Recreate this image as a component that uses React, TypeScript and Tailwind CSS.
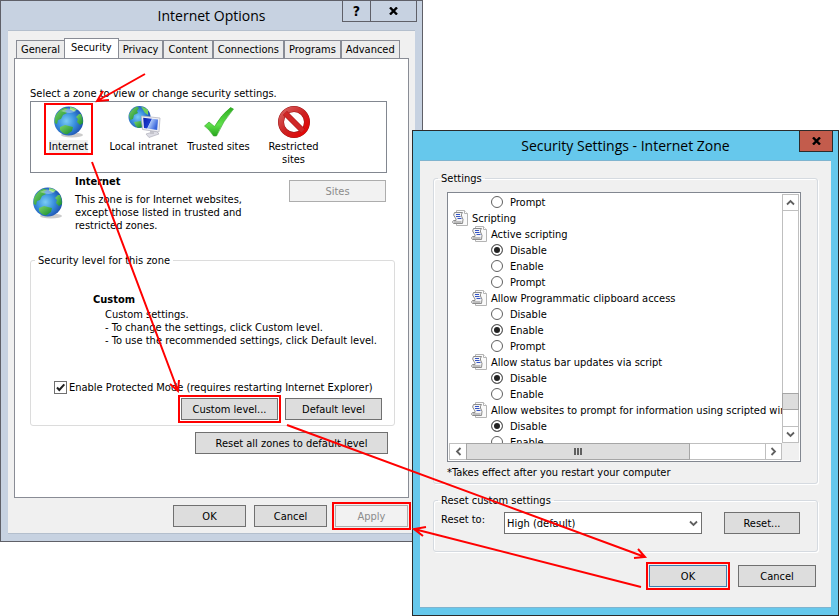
import type { ReactNode } from 'react';

const tabs = ['General', 'Security', 'Privacy', 'Content', 'Connections', 'Programs', 'Advanced'];

const scriptSettings = [
  { title: 'Active scripting', name: 'active', options: ['Disable', 'Enable', 'Prompt'], value: 'Disable' },
  { title: 'Allow Programmatic clipboard access', name: 'clipboard', options: ['Disable', 'Enable', 'Prompt'], value: 'Enable' },
  { title: 'Allow status bar updates via script', name: 'statusbar', options: ['Disable', 'Enable'], value: 'Disable' },
  { title: 'Allow websites to prompt for information using scripted windows', name: 'prompts', options: ['Disable', 'Enable'], value: 'Disable' },
];

// Two-pixel marker drawn around the controls the arrows point at
const marked = 'outline-2 outline-offset-1 outline-[#ff0000]';

function GlobeIcon({ className = 'w-8 h-8' }: { className?: string }) {
  return (
    <svg viewBox="0 0 32 32" className={`shrink-0 ${className}`} aria-hidden="true">
      <defs>
        <radialGradient id="sea" cx="0.42" cy="0.5" r="0.6">
          <stop offset="0" stopColor="#7accf6" />
          <stop offset="0.5" stopColor="#3a90de" />
          <stop offset="1" stopColor="#1a4cac" />
        </radialGradient>
        <linearGradient id="land" x1="0" y1="0" x2="1" y2="1">
          <stop offset="0" stopColor="#7fd46a" />
          <stop offset="1" stopColor="#128a2c" />
        </linearGradient>
      </defs>
      <ellipse cx="19" cy="29" rx="11" ry="2.4" fill="#000" opacity="0.2" />
      <circle cx="15.7" cy="15" r="14.5" fill="url(#sea)" />
      <path d="M2 11 Q5 4 12 1.4 L15 3 L12 5 L14 7 L10 9 L8 13 L5 14 L4 18 L1.6 17 Z" fill="url(#land)" />
      <path d="M17 1 Q21 1.4 24 3.6 L21 5.6 L17 3.6 Z" fill="#8bdc74" />
      <path d="M26 8 L28 8 Q30 12 30 17 L27 19 L24 16 L25 13 L23 11 Z" fill="url(#land)" />
      <path d="M7 21 L12 19 L20 21 L19 25 L14 28.5 Q10 28 7 24 Z" fill="url(#land)" />
      <path d="M8 5 Q15 0 23 5 Q17 9 8 5" fill="#fff" opacity="0.35" />
    </svg>
  );
}

function IntranetIcon() {
  return (
    <svg viewBox="0 0 32 32" className="h-8 w-8 shrink-0 overflow-visible" aria-hidden="true">
      <defs>
        <linearGradient id="screen" x1="0" y1="0" x2="1" y2="0.4">
          <stop offset="0" stopColor="#0c1fa8" />
          <stop offset="0.5" stopColor="#1c3fd0" />
          <stop offset="0.55" stopColor="#a9c4f8" />
          <stop offset="1" stopColor="#3865dc" />
        </linearGradient>
      </defs>
      <circle cx="11.5" cy="11" r="11" fill="url(#sea)" />
      <path d="M1 9 Q3 3 9 0.5 L11 2 L9 5 L10 7 L6 9 L5 13 L2 14 Z" fill="url(#land)" />
      <path d="M13 0.4 Q17 1 20 4 L20 9 L17 7 Z" fill="#6fce5c" />
      <path d="M6 16 L13 15 L14 21 L10 22 Q7 20 6 16 Z" fill="url(#land)" />
      <path d="M18 28 L28 25 L31 28 L21 31.5 Z" fill="#dcdce4" stroke="#a8a8b4" strokeWidth="0.6" />
      <path d="M22 23 L26 23 L26 28 L22 28 Z" fill="#c4c4cc" />
      <path d="M13.5 10 L32 12 L31 26 L14.5 23.5 Z" fill="#f0f0f4" stroke="#b8b8c2" strokeWidth="0.8" />
      <path d="M15.2 11.8 L30 13.4 L29.2 24 L16 22 Z" fill="url(#screen)" />
    </svg>
  );
}

function TrustedIcon() {
  return (
    <svg viewBox="0 0 32 32" className="h-8 w-8 shrink-0" aria-hidden="true">
      <defs>
        <linearGradient id="tick" x1="0" y1="0" x2="0" y2="1">
          <stop offset="0" stopColor="#2fae22" />
          <stop offset="0.6" stopColor="#5fe04a" />
          <stop offset="1" stopColor="#27a51c" />
        </linearGradient>
      </defs>
      <path d="M1.5 20 L6 16 L11.5 20.5 Q18 9 27.5 1.5 L30.5 3 Q20 15 13.5 30 L10.5 30 Q6 23 1.5 20 Z" fill="url(#tick)" stroke="#2fa324" strokeWidth="0.6" />
    </svg>
  );
}

function RestrictedIcon() {
  return (
    <svg viewBox="0 0 32 32" className="h-8 w-8 shrink-0" aria-hidden="true">
      <defs>
        <linearGradient id="stop" x1="0" y1="0" x2="1" y2="1">
          <stop offset="0" stopColor="#d9605f" />
          <stop offset="0.5" stopColor="#cc2222" />
          <stop offset="1" stopColor="#e80000" />
        </linearGradient>
      </defs>
      <circle cx="16" cy="16" r="13" fill="#fff" stroke="#9c1414" strokeWidth="6" />
      <circle cx="16" cy="16" r="13" fill="none" stroke="url(#stop)" strokeWidth="5" />
      <path d="M7 7 L25 25" stroke="#a51414" strokeWidth="5.6" />
      <path d="M7 7 L25 25" stroke="#cf2626" strokeWidth="4.6" />
    </svg>
  );
}

function ScriptIcon() {
  return (
    <svg viewBox="0 0 16 16" className="h-4 w-4 shrink-0" aria-hidden="true">
      <path d="M4.5 0.5 H12.5 L15.5 3.5 V15.5 H4.5 Z" fill="#fafafa" stroke="#b4b4b4" />
      <path d="M12.5 0.5 V3.5 H15.5" fill="#fff" stroke="#b4b4b4" />
      <path d="M2.5 2.5 H10.5 Q9 4 9.5 6 Q12 9 10.5 13.5 H1.5 Q-0.5 12 1.5 10.5 H4 Q4.5 9 3 7.5 Q0.5 5 2.5 2.5 Z" fill="#f4f4f6" stroke="#8c8c8c" />
      <path d="M4 4.5 H8 M4 6.5 H8.5 M5.5 8.5 H9.5" stroke="#3555c4" />
      <path d="M2 12 H9.5" stroke="#b0b0b0" strokeWidth="1.6" />
    </svg>
  );
}

function Chevron({ d }: { d: string }) {
  return (
    <svg viewBox="0 0 9 9" className="h-[9px] w-[9px]" aria-hidden="true">
      <path d={d} fill="none" stroke="#606060" strokeWidth="1.8" />
    </svg>
  );
}

function CloseGlyph() {
  return (
    <svg viewBox="0 0 9 8" className="h-2 w-[9px]" aria-hidden="true">
      <path d="M1 0.5 L8 7.5 M8 0.5 L1 7.5" stroke="#000" strokeWidth="2.4" />
    </svg>
  );
}

function PushButton({ children, className = '', disabled = false }: { children: ReactNode; className?: string; disabled?: boolean }) {
  const tone = disabled ? 'border-[#adadad] bg-[#f2f2f2] text-[#8b8b8b]' : 'border-[#707070] bg-[#dddddd] text-black';
  return (
    <button type="button" disabled={disabled} className={`h-[22px] shrink-0 border text-center ${tone} ${className}`}>
      {children}
    </button>
  );
}

function Zone({ icon, label, selected = false }: { icon: ReactNode; label: string; selected?: boolean }) {
  return (
    <button type="button" className="flex w-[75px] justify-center">
      <span className={`flex h-[46px] w-[43px] flex-col items-center gap-0.5 ${selected ? marked : ''}`}>
        {icon}
        <span className={selected ? 'bg-[#f0f0f0]' : 'w-[72px]'}>{label}</span>
      </span>
    </button>
  );
}

function RadioRow({ name, label, checked = false }: { name: string; label: string; checked?: boolean }) {
  return (
    <label className="flex h-4 items-center gap-[7px] pl-[42px]">
      <input
        type="radio"
        name={name}
        defaultChecked={checked}
        className="h-3 w-3 appearance-none rounded-full border border-[#606060] bg-white checked:bg-[#222] checked:shadow-[inset_0_0_0_2px_#fff]"
      />
      {label}
    </label>
  );
}

function InternetOptions() {
  return (
    <section className="absolute top-0 left-0 w-[423px] border border-[#5f6068] bg-[#c7d2e1] px-[7px] pb-[7px]">
      <header className="relative flex h-[29px] items-center justify-center">
        <h1 className="font-['Open_Sans','Noto_Sans',sans-serif] text-[14px]">Internet Options</h1>
        <div className="absolute -top-px -right-0.5 flex h-[22px] border border-[#5f6068] text-[14px] font-bold">
          <button type="button" aria-label="Help" className="w-7 border-r border-[#5f6068]">?</button>
          <button type="button" aria-label="Close" className="flex w-[45px] items-center justify-center">
            <CloseGlyph />
          </button>
        </div>
      </header>

      <div className="border-y border-[#b4bfcd] bg-[#f0f0f0] px-1.5 pt-[7px] pb-1.5">
        <nav className="flex h-5 items-end pl-0.5">
          {tabs.map(tab => (
            <button
              key={tab}
              type="button"
              className={tab === 'Security'
                ? 'z-10 -mx-px h-5 border border-b-0 border-[#898c95] bg-white px-1.5 pb-0.5'
                : 'h-[18px] border border-b-0 border-[#898c95] bg-[#ececec] px-1'}
            >
              {tab}
            </button>
          ))}
        </nav>

        <div className="border border-[#898c95] bg-white pt-7 pr-[13px] pb-[43px] pl-[15px]">
          <p>Select a zone to view or change security settings.</p>
          <div className="mt-px mr-2 flex h-[72px] border border-[#828790] pt-1">
            <Zone icon={<GlobeIcon />} label="Internet" selected />
            <Zone icon={<IntranetIcon />} label="Local intranet" />
            <Zone icon={<TrustedIcon />} label="Trusted sites" />
            <Zone icon={<RestrictedIcon />} label="Restricted sites" />
          </div>

          <div className="mr-[9px] flex h-[81px] pt-0.5">
            <GlobeIcon className="mt-3 ml-0.5 h-8 w-8" />
            <div className="ml-[11px] w-[180px]">
              <h2 className="font-bold">Internet</h2>
              <p className="mt-[5px]">This zone is for Internet websites, except those listed in trusted and restricted zones.</p>
            </div>
            <PushButton disabled className="mt-[5px] ml-auto w-[97px]">Sites</PushButton>
          </div>

          <fieldset className="h-[172px] rounded-[3px] border border-[#dcdcdc]">
            <legend className="ml-1 px-[3px]">Security level for this zone</legend>
            <div className="pt-[26px] pl-[62px]">
              <h3 className="font-bold">Custom</h3>
              <div className="mt-0.5 pl-3">
                <p>Custom settings.</p>
                <p>- To change the settings, click Custom level.</p>
                <p>- To use the recommended settings, click Default level.</p>
              </div>
            </div>
            <label className="mt-[34px] flex items-center gap-0.5 pl-[23px]">
              <span className="grid">
                <input type="checkbox" defaultChecked className="col-start-1 row-start-1 h-[13px] w-[13px] appearance-none border border-[#707070] bg-white" />
                <svg viewBox="0 0 13 13" className="pointer-events-none col-start-1 row-start-1 h-[13px] w-[13px]" aria-hidden="true">
                  <path d="M3 6.5 L5.3 9 L10.3 3.3" fill="none" stroke="#212121" strokeWidth="2" />
                </svg>
              </span>
              Enable Protected Mode (requires restarting Internet Explorer)
            </label>
            <div className="mt-1 flex justify-end gap-[7px] pr-3">
              <PushButton className={`w-[97px] ${marked}`}>Custom level...</PushButton>
              <PushButton className="w-[97px]">Default level</PushButton>
            </div>
          </fieldset>
          <PushButton className="mt-1.5 mr-[7px] ml-auto block w-[193px]">Reset all zones to default level</PushButton>
        </div>

        <div className="mt-[7px] flex justify-end gap-2 pr-px">
          <PushButton className="w-[73px]">OK</PushButton>
          <PushButton className="w-[73px]">Cancel</PushButton>
          <PushButton disabled className={`w-[73px] ${marked}`}>Apply</PushButton>
        </div>
      </div>
    </section>
  );
}

function SettingsTree() {
  return (
    <div className="grid h-[270px] grid-cols-[minmax(0,1fr)_17px] grid-rows-[minmax(0,1fr)_17px] border border-[#828790] bg-white p-px">
      <div className="overflow-hidden whitespace-nowrap">
        <RadioRow name="previous" label="Prompt" />
        <div className="flex h-4 items-center gap-1 pl-[3px]"><ScriptIcon />Scripting</div>
        {scriptSettings.map(setting => (
          <div key={setting.name}>
            <div className="flex h-4 items-center gap-1 pl-[22px]"><ScriptIcon />{setting.title}</div>
            {setting.options.map(option => (
              <RadioRow key={option} name={setting.name} label={option} checked={option === setting.value} />
            ))}
          </div>
        ))}
      </div>

      {/* Vertical scroll bar */}
      <div className="flex flex-col border border-[#bfbfbf]">
        <button type="button" aria-label="Scroll up" className="flex h-4 items-center justify-center border-b border-[#bfbfbf]"><Chevron d="M1 6.5 L4.5 3 L8 6.5" /></button>
        <div className="grow" />
        <div className="-mx-px h-[17px] border border-[#a6a6a6] bg-[#dddddd]" />
        <div className="h-4" />
        <button type="button" aria-label="Scroll down" className="flex h-4 items-center justify-center border-t border-[#bfbfbf]"><Chevron d="M1 2.5 L4.5 6 L8 2.5" /></button>
      </div>

      {/* Horizontal scroll bar */}
      <div className="flex border border-[#bfbfbf]">
        <button type="button" aria-label="Scroll left" className="flex w-4 items-center justify-center"><Chevron d="M6.5 1 L3 4.5 L6.5 8" /></button>
        <div className="-my-px flex w-[224px] items-center justify-center gap-px border border-[#a6a6a6] bg-[#dddddd]">
          <span className="h-[7px] w-0.5 bg-[#606060]" />
          <span className="h-[7px] w-0.5 bg-[#606060]" />
          <span className="h-[7px] w-0.5 bg-[#606060]" />
        </div>
        <div className="grow" />
        <button type="button" aria-label="Scroll right" className="flex w-4 items-center justify-center border-l border-[#bfbfbf]"><Chevron d="M2.5 1 L6 4.5 L2.5 8" /></button>
      </div>
      <div className="bg-[#f0f0f0]" />
    </div>
  );
}

function SecuritySettings() {
  return (
    <section className="absolute top-[130px] left-[412px] w-[427px] border border-[#2b2b2b] bg-[#66c8ec] px-[7px] pb-[7px]">
      <header className="relative flex h-[29px] items-center justify-center">
        <h1 className="font-['Open_Sans','Noto_Sans',sans-serif] text-[14px]">Security Settings - Internet Zone</h1>
        <button type="button" aria-label="Close" className="absolute -top-px -right-0.5 flex h-[22px] w-[34px] items-center justify-center border border-[#2b2b2b] bg-[#c35c4c]">
          <CloseGlyph />
        </button>
      </header>

      <div className="border-y border-[#7fb4cf] bg-[#f0f0f0] px-[13px] pt-[11px] pb-5">
        <fieldset className="rounded-[3px] border border-[#d5dae0] px-[13px] pb-1 shadow-[inset_1px_1px_0_#fff,1px_1px_0_#fff]">
          <legend className="-ml-[9px] px-[3px]">Settings</legend>
          <div className="mt-[7px] mr-[3px]">
            <SettingsTree />
          </div>
          <p className="mt-1">*Takes effect after you restart your computer</p>
        </fieldset>

        <fieldset className="mt-2.5 h-[58px] rounded-[3px] border border-[#d5dae0] shadow-[inset_1px_1px_0_#fff,1px_1px_0_#fff]">
          <legend className="ml-1 px-[3px]">Reset custom settings</legend>
          <div className="flex items-start pt-[5px] pr-[17px] pl-[7px]">
            <label htmlFor="reset-to" className="mt-px w-[63px]">Reset to:</label>
            <span className="grid w-[198px] items-center">
              <select id="reset-to" className="col-start-1 row-start-1 h-[22px] appearance-none border border-[#707070] bg-white pl-0.5">
                <option>High (default)</option>
              </select>
              <span className="pointer-events-none col-start-1 row-start-1 mr-1 justify-self-end"><Chevron d="M1 2.5 L4.5 6 L8 2.5" /></span>
            </span>
            <PushButton className="ml-auto w-[76px]">Reset...</PushButton>
          </div>
        </fieldset>

        <div className="mt-[13px] flex justify-end gap-[11px] pr-0.5">
          <button type="button" className={`h-[22px] w-[78px] border border-[#3c7fb1] bg-[#dddddd] ${marked}`}>OK</button>
          <PushButton className="w-[78px]">Cancel</PushButton>
        </div>
      </div>
    </section>
  );
}

export default function App() {
  return (
    <main className="relative min-h-screen overflow-hidden bg-white font-['DejaVu_Sans_Condensed','DejaVu_Sans',sans-serif] text-[11px] leading-[13px] text-black">
      <InternetOptions />
      <SecuritySettings />
      {/* Order of the clicks */}
      <svg viewBox="0 0 839 616" className="pointer-events-none absolute top-0 left-0 w-[839px]" fill="none" stroke="#ff0000" strokeWidth="2" aria-hidden="true">
        <path d="M145 74 L97 101 M109 100 L97 101 L103 91" />
        <path d="M92 162 L178 391 M170 384 L178 391 L179 380" />
        <path d="M287 425 L645 557 M638 549 L645 557 L634 558" />
        <path d="M641 587 L414 529 M426 527 L414 529 L423 536" />
      </svg>
    </main>
  );
}
